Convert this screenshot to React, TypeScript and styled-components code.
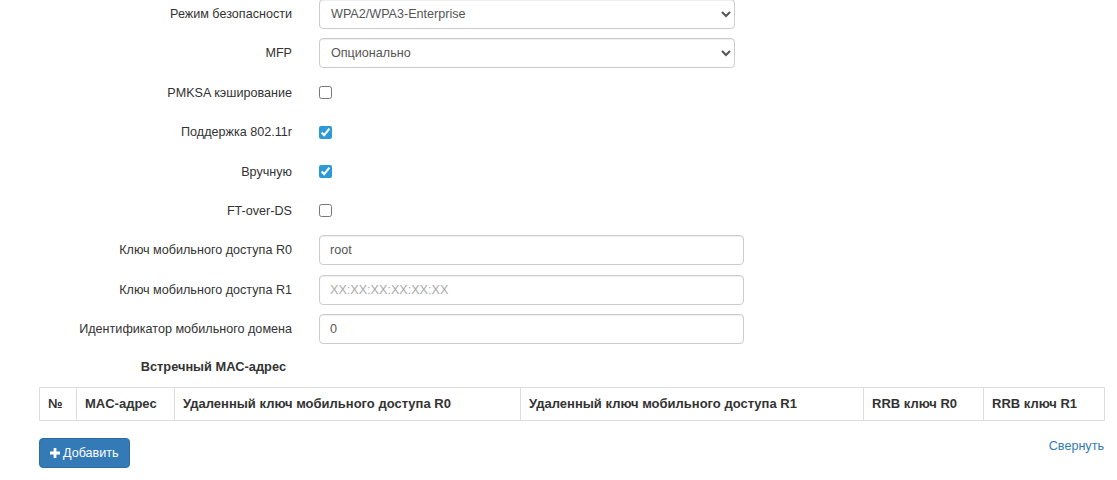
import React from "react";
import styled, { createGlobalStyle } from "styled-components";

const GlobalStyle = createGlobalStyle`
  html, body {
    margin: 0;
    padding: 0;
    background: #fff;
  }
  body {
    font-family: "Liberation Sans", Arial, sans-serif;
    font-size: 12.6px;
    color: #333;
  }
`;

const Page = styled.div`
  width: 1117px;
  height: 480px;
  overflow: hidden;
  padding: 0 13px 0 39px;
  box-sizing: border-box;
`;

const Form = styled.div`
  display: flex;
  flex-direction: column;
  gap: 9.4px;
  margin-top: -1px;
`;

const Row = styled.div`
  display: flex;
  align-items: center;
  height: 30px;
`;

const Label = styled.label`
  width: 280px;
  padding-right: 27px;
  box-sizing: border-box;
  text-align: right;
  flex-shrink: 0;
`;

const Select = styled.select`
  width: 416px;
  height: 30px;
  padding: 0 7px;
  font-family: inherit;
  font-size: 12.6px;
  color: #555;
  background: #fff;
  border: 1px solid #ccc;
  border-radius: 4px;
  box-shadow: inset 0 1px 1px rgba(0, 0, 0, 0.075);
  box-sizing: border-box;
  outline: none;
`;

const TextInput = styled.input`
  width: 425px;
  height: 30px;
  padding: 0 10px;
  font-family: inherit;
  font-size: 12.6px;
  color: #555;
  background: #fff;
  border: 1px solid #ccc;
  border-radius: 4px;
  box-shadow: inset 0 1px 1px rgba(0, 0, 0, 0.075);
  box-sizing: border-box;
  outline: none;

  &::placeholder {
    color: #aaa;
  }
`;

const Check = styled.input`
  width: 13px;
  height: 13px;
  margin: 0;
  accent-color: #2c9ad6;
`;

const SectionTitle = styled.div`
  width: 280px;
  padding-right: 33px;
  box-sizing: border-box;
  text-align: right;
  font-weight: bold;
  font-size: 12.8px;
  margin-top: 16px;
  line-height: 14px;
`;

const Table = styled.table`
  width: 1065px;
  margin-top: 13px;
  border-collapse: collapse;
  table-layout: fixed;
`;

const Th = styled.th<{ $w: number }>`
  width: ${(p) => p.$w}px;
  box-sizing: border-box;
  padding: 8px;
  text-align: left;
  font-weight: bold;
  font-size: 13px;
  line-height: 16px;
  border: 1px solid #ddd;
  white-space: nowrap;
`;

const Footer = styled.div`
  display: flex;
  justify-content: space-between;
  align-items: flex-start;
  width: 1065px;
  margin-top: 17px;
`;

const AddButton = styled.button`
  display: inline-flex;
  align-items: center;
  gap: 3px;
  height: 30px;
  padding: 0 10px 0 10px;
  font-family: inherit;
  font-size: 12.6px;
  color: #fff;
  background: #337ab7;
  border: 1px solid #2e6da4;
  border-radius: 4px;
`;

const Link = styled.a`
  color: #337ab7;
  text-decoration: none;
  margin-top: 1px;
`;

const PlusIcon = () => (
  <svg width="10" height="10" viewBox="0 0 10 10">
    <path d="M3.6 0h2.8v3.6H10v2.8H6.4V10H3.6V6.4H0V3.6h3.6z" fill="#fff" />
  </svg>
);

const columns: [string, number][] = [
  ["№", 37],
  ["MAC-адрес", 98],
  ["Удаленный ключ мобильного доступа R0", 346],
  ["Удаленный ключ мобильного доступа R1", 343],
  ["RRB ключ R0", 120],
  ["RRB ключ R1", 121],
];

export default function App() {
  return (
    <Page>
      <GlobalStyle />
      <Form>
        <Row>
          <Label>Режим безопасности</Label>
          <Select defaultValue="wpa">
            <option value="wpa">WPA2/WPA3-Enterprise</option>
          </Select>
        </Row>
        <Row>
          <Label>MFP</Label>
          <Select defaultValue="opt">
            <option value="opt">Опционально</option>
          </Select>
        </Row>
        <Row>
          <Label>PMKSA кэширование</Label>
          <Check type="checkbox" />
        </Row>
        <Row>
          <Label>Поддержка 802.11r</Label>
          <Check type="checkbox" defaultChecked />
        </Row>
        <Row>
          <Label>Вручную</Label>
          <Check type="checkbox" defaultChecked />
        </Row>
        <Row>
          <Label>FT-over-DS</Label>
          <Check type="checkbox" />
        </Row>
        <Row>
          <Label>Ключ мобильного доступа R0</Label>
          <TextInput defaultValue="root" />
        </Row>
        <Row>
          <Label>Ключ мобильного доступа R1</Label>
          <TextInput placeholder="XX:XX:XX:XX:XX:XX" />
        </Row>
        <Row>
          <Label>Идентификатор мобильного домена</Label>
          <TextInput defaultValue="0" />
        </Row>
      </Form>
      <SectionTitle>Встречный MAC-адрес</SectionTitle>
      <Table>
        <thead>
          <tr>
            {columns.map(([title, w]) => (
              <Th key={title} $w={w}>
                {title}
              </Th>
            ))}
          </tr>
        </thead>
      </Table>
      <Footer>
        <AddButton>
          <PlusIcon />
          Добавить
        </AddButton>
        <Link href="#">Свернуть</Link>
      </Footer>
    </Page>
  );
}
